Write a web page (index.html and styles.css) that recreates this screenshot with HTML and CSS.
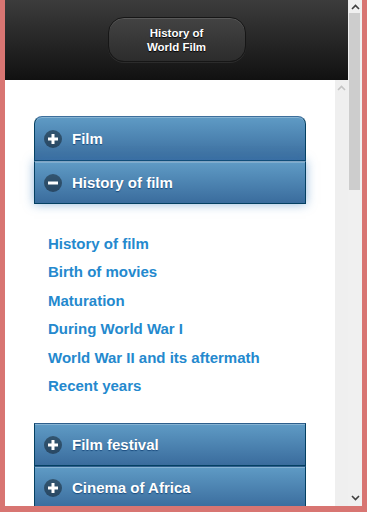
FILE: index.html
```html
<!DOCTYPE html>
<html lang="en">
<head>
  <meta charset="UTF-8">
  <meta name="viewport" content="width=device-width, initial-scale=1.0">
  <title>History of World Film</title>
  <link rel="stylesheet" href="styles.css">
</head>
<body>

  <div class="window">
    <div class="page">

      <!-- Header bar -->
      <header class="bar">
        <div class="title-btn">History of<br>World Film</div>
      </header>

      <div class="main">
        <div class="content">

          <!-- Collapsible set -->
          <div class="set">
            <div class="set-head first">
              <svg class="icon" width="18" height="18" viewBox="0 0 18 18"><circle cx="9" cy="9" r="9" fill="rgba(0,0,0,0.4)"/><rect x="4" y="7.5" width="10" height="3" fill="#fff"/><rect x="7.5" y="4" width="3" height="10" fill="#fff"/></svg>
              Film
            </div>
            <div class="set-head open">
              <svg class="icon" width="18" height="18" viewBox="0 0 18 18"><circle cx="9" cy="9" r="9" fill="rgba(0,0,0,0.4)"/><rect x="4" y="7.5" width="10" height="3" fill="#fff"/></svg>
              History of film
            </div>
            <div class="set-body">
              <a href="#">History of film</a>
              <a href="#">Birth of movies</a>
              <a href="#">Maturation</a>
              <a href="#">During World War I</a>
              <a href="#">World War II and its aftermath</a>
              <a href="#">Recent years</a>
            </div>
            <div class="set-head">
              <svg class="icon" width="18" height="18" viewBox="0 0 18 18"><circle cx="9" cy="9" r="9" fill="rgba(0,0,0,0.4)"/><rect x="4" y="7.5" width="10" height="3" fill="#fff"/><rect x="7.5" y="4" width="3" height="10" fill="#fff"/></svg>
              Film festival
            </div>
            <div class="set-head">
              <svg class="icon" width="18" height="18" viewBox="0 0 18 18"><circle cx="9" cy="9" r="9" fill="rgba(0,0,0,0.4)"/><rect x="4" y="7.5" width="10" height="3" fill="#fff"/><rect x="7.5" y="4" width="3" height="10" fill="#fff"/></svg>
              Cinema of Africa
            </div>
          </div>

        </div>

        <!-- Inner scrollbar -->
        <div class="inner-scroll">
          <svg width="9" height="6" viewBox="0 0 9 6"><polyline points="1,5 4.5,1.5 8,5" fill="none" stroke="#c4c4c4" stroke-width="1.6"/></svg>
        </div>
      </div>
    </div>

    <!-- Outer scrollbar -->
    <div class="outer-scroll">
      <svg class="arrow" width="9" height="6" viewBox="0 0 9 6"><polyline points="1,5 4.5,1.5 8,5" fill="none" stroke="#404040" stroke-width="1.6"/></svg>
      <div class="thumb"></div>
      <div class="track"></div>
      <svg class="arrow" width="9" height="6" viewBox="0 0 9 6"><polyline points="1,1 4.5,4.5 8,1" fill="none" stroke="#404040" stroke-width="1.6"/></svg>
    </div>
  </div>

</body>
</html>
```

FILE: styles.css
```css
/* Global Styles */
* {
  margin: 0;
  padding: 0;
  box-sizing: border-box;
}

body {
  font-family: 'Liberation Sans', Arial, sans-serif;
  background: #d87572;
  width: 367px;
  height: 512px;
  overflow: hidden;
}

.window {
  display: flex;
  height: 512px;
  padding: 0 5px 6px 5px;
}

.page {
  width: 343px;
  display: flex;
  flex-direction: column;
}

/* Header */
.bar {
  height: 80px;
  background: linear-gradient(#3c3c3c, #111);
  display: flex;
  justify-content: center;
  padding-top: 17px;
}

.title-btn {
  width: 138px;
  height: 45px;
  border: 1px solid #161616;
  border-radius: 16px;
  background: linear-gradient(#434343, #2c2c2c);
  box-shadow: inset 0 1px 0 rgba(255, 255, 255, 0.12), 0 1px 0 rgba(255, 255, 255, 0.08);
  color: #fff;
  font-size: 11.5px;
  font-weight: bold;
  line-height: 14px;
  text-align: center;
  padding-top: 8px;
  text-shadow: 0 1px 1px #000;
}

/* Main area */
.main {
  flex: 1;
  display: flex;
  overflow: hidden;
}

.content {
  width: 330px;
  background: #fff;
  padding: 36px 29px 0 29px;
  overflow: hidden;
}

.inner-scroll {
  width: 13px;
  background: #efefef;
  display: flex;
  justify-content: center;
  padding-top: 5px;
}

/* Collapsible set */
.set-head {
  height: 43px;
  display: flex;
  align-items: center;
  padding-left: 9px;
  gap: 10px;
  color: #fff;
  font-size: 15px;
  font-weight: bold;
  text-shadow: 0 1px 1px #194b7e;
  background: linear-gradient(#5f9bc5, #3a6c9d);
  border: 1px solid #044062;
  border-top: 1px solid #2e5f8c;
  box-shadow: inset 0 1px 0 rgba(255, 255, 255, 0.25);
}

.set-head.first {
  height: 45px;
  border-radius: 8px 8px 0 0;
  border-top-color: #3d6f9c;
}

.set-head.open {
  border-top-color: #7fa3c2;
  box-shadow: inset 0 1px 0 rgba(255, 255, 255, 0.2), 0 0 10px rgba(56, 123, 190, 0.55);
  position: relative;
}

.icon {
  flex: none;
}

.set-body {
  padding: 26px 14px 23px 14px;
}

.set-body a {
  display: block;
  height: 28.4px;
  line-height: 28.4px;
  color: #2489ce;
  font-size: 15px;
  font-weight: bold;
  text-decoration: none;
}

/* Outer scrollbar */
.outer-scroll {
  width: 14px;
  background: #f0f0f0;
  display: flex;
  flex-direction: column;
  align-items: center;
  padding: 4px 0 5px 0;
}

.outer-scroll .thumb {
  width: 11px;
  height: 177px;
  margin: 3px 1px 0 0;
  background: #cdcdcd;
}

.outer-scroll .track {
  flex: 1;
}
```
